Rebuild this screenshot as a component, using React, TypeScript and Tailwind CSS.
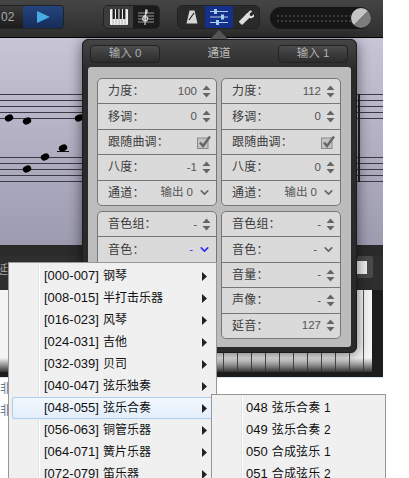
import { ChevronDown } from 'lucide-react'

const font = { fontFamily: '"Liberation Sans", "Noto Sans CJK SC", sans-serif' }

const channel0 = [
  { label: '力度：', value: '100' },
  { label: '移调：', value: '0' },
  { label: '跟随曲调：', check: true },
  { label: '八度：', value: '-1' },
  { label: '通道：', value: '输出 0', chevron: true },
]
const channel1 = [
  { label: '力度：', value: '112' },
  { label: '移调：', value: '0' },
  { label: '跟随曲调：', check: true },
  { label: '八度：', value: '0' },
  { label: '通道：', value: '输出 0', chevron: true },
]
// the last rows of this card sit behind the open menu
const sound0 = [
  { label: '音色组：', value: '-' },
  { label: '音色：', value: '-', chevron: true, active: true },
  { label: '', blank: true },
  { label: ' ', blank: true },
  { label: '  ', blank: true },
]
const sound1 = [
  { label: '音色组：', value: '-' },
  { label: '音色：', value: '-', chevron: true },
  { label: '音量：', value: '-' },
  { label: '声像：', value: '-' },
  { label: '延音：', value: '127' },
]

const groups = [
  ['[000-007]', '钢琴'],
  ['[008-015]', '半打击乐器'],
  ['[016-023]', '风琴'],
  ['[024-031]', '吉他'],
  ['[032-039]', '贝司'],
  ['[040-047]', '弦乐独奏'],
  ['[048-055]', '弦乐合奏'],
  ['[056-063]', '铜管乐器'],
  ['[064-071]', '簧片乐器'],
  ['[072-079]', '笛乐器'],
]

const voices = [
  ['048', '弦乐合奏 1'],
  ['049', '弦乐合奏 2'],
  ['050', '合成弦乐 1'],
  ['051', '合成弦乐 2'],
]

type Item = { label: string; value?: string; check?: boolean; chevron?: boolean; active?: boolean; blank?: boolean }

function Stepper() {
  return (
    <svg width="9" height="13" viewBox="0 0 9 13" className="shrink-0">
      <path d="M4.5 0.5 L8.5 5 L0.5 5 Z M0.5 8 L8.5 8 L4.5 12.5 Z" fill="#666" />
    </svg>
  )
}

function Check() {
  return (
    <svg width="14" height="14" viewBox="0 0 14 14" className="shrink-0">
      <rect x="0.5" y="3" width="10.5" height="10.5" fill="#c4c4c4" stroke="#8a8a8a" />
      <path d="M3 7.5 L6 11 L13 1.5" fill="none" stroke="#666" strokeWidth="2.4" />
    </svg>
  )
}

function Row({ item }: { item: Item }) {
  return (
    <div className="flex min-h-0 flex-1 items-center border-b border-[#777] pl-[10px] pr-[5px] last:border-b-0">
      {!item.blank && (
        <>
          <span className="text-[12px] tracking-[0.2px] text-[#3c3c3c]">{item.label}</span>
          <span className="ml-auto flex items-center gap-[5px]">
            {item.value && (
              <span className={`text-[11.5px] ${item.active ? 'text-[#3b3bea]' : 'text-[#555]'}`}>{item.value}</span>
            )}
            {item.check && <Check />}
            {item.chevron && (
              <ChevronDown size={13} strokeWidth={3} className={item.active ? 'text-[#3030f0]' : 'text-[#666]'} />
            )}
            {!item.check && !item.chevron && <Stepper />}
          </span>
        </>
      )}
    </div>
  )
}

function Card({ items }: { items: Item[] }) {
  return (
    <div className="flex h-[128px] flex-col rounded-[5px] border border-[#777] bg-[#dadada]">
      {items.map((item) => (
        <Row key={item.label} item={item} />
      ))}
    </div>
  )
}

function Score() {
  return (
    <svg width="383" height="207" viewBox="0 38 383 207" className="block">
      {[94, 100, 106, 112, 118, 157, 163, 169, 175, 181].map((y) => (
        <line key={y} x1="0" x2="383" y1={y + 0.5} y2={y + 0.5} stroke="#3a3a44" />
      ))}
      <line x1="359" x2="359" y1="94" y2="182" stroke="#222" strokeWidth="2" />
      <line x1="57" x2="69" y1="151.5" y2="151.5" stroke="#111" />
      {[
        [9, 118],
        [27, 121],
        [79, 118],
        [63, 148],
        [45, 157],
        [27, 169],
      ].map(([x, y]) => (
        <ellipse key={`${x}-${y}`} cx={x} cy={y} rx="4.4" ry="3.2" fill="#000" transform={`rotate(-25 ${x} ${y})`} />
      ))}
    </svg>
  )
}

function Keys() {
  return (
    <div className="relative h-[82px] w-[372px] bg-[repeating-linear-gradient(90deg,#f4f4f4_0px,#f4f4f4_13px,#555_13px,#555_14px)]">
      <div className="absolute inset-x-0 bottom-0 h-[14px] bg-gradient-to-b from-transparent to-[#333]" />
    </div>
  )
}

function TopBar() {
  return (
    <div className="relative flex h-[38px] items-center border-b border-black bg-gradient-to-b from-[#454545] to-[#2e2e2e] pb-[3px]">
      <div className="flex h-[24px] w-[64px] overflow-hidden rounded-r-[4px] border border-l-0 border-[#222]">
        <div className="flex w-[23px] items-center bg-gradient-to-b from-[#3a3a3a] to-[#1c1c1c] pl-[1px] text-[12px] text-[#aaa]">02</div>
        <div className="flex flex-1 items-center justify-center bg-gradient-to-b from-[#24457f] to-[#162c58]">
          <svg width="13" height="12" viewBox="0 0 13 12">
            <path d="M0 0 L13 6 L0 12 Z" fill="#45ace6" />
          </svg>
        </div>
      </div>

      <div className="ml-[39px] flex h-[24px] w-[57px] overflow-hidden rounded-[5px] border border-[#222]">
        <div className="flex w-[29px] items-center justify-center bg-[#3c3c3c]">
          <svg width="18" height="16" viewBox="0 0 18 16">
            <rect width="18" height="16" fill="#eee" rx="1" />
            {[2.5, 6, 9.5, 13].map((x) => (
              <rect key={x} x={x} y="0" width="2.4" height="10" fill="#222" />
            ))}
            {[3, 6, 9, 12, 15].map((x) => (
              <line key={x} x1={x} x2={x} y1="10" y2="16" stroke="#888" strokeWidth="0.6" />
            ))}
          </svg>
        </div>
        <div className="flex flex-1 items-center justify-center bg-[#1b1b1b]">
          <svg width="18" height="18" viewBox="0 0 18 18">
            {[5, 8, 11, 14].map((y) => (
              <line key={y} x1="1" x2="17" y1={y} y2={y} stroke="#999" />
            ))}
            <path d="M8 17 L8.8 2 Q10.5 1 10 4 Q9 7 6 9.5 Q4.5 12 8 13 Q11.5 12.5 10.5 9.5 Q8.5 8 7 10.5" fill="none" stroke="#d8d8d8" strokeWidth="1.2" />
          </svg>
        </div>
      </div>

      <div className="ml-[17px] flex h-[24px] w-[83px] overflow-hidden rounded-[5px] border border-[#222]">
        <div className="flex w-[27px] items-center justify-center bg-[#2a2a2a]">
          <svg width="12" height="14" viewBox="0 0 12 14">
            <path d="M3.5 0.5 L8.5 0.5 L11.5 13.5 L0.5 13.5 Z" fill="#d6d6d6" />
            <path d="M3 10 L8 3" stroke="#222" strokeWidth="1.2" />
          </svg>
        </div>
        <div className="flex w-[28px] items-center justify-center bg-[#14308a]">
          <svg width="18" height="16" viewBox="0 0 18 16">
            {[2.5, 8, 13.5].map((y) => (
              <line key={y} x1="0" x2="18" y1={y} y2={y} stroke="#b8c8e8" />
            ))}
            <rect x="4" y="0" width="3" height="5" fill="#9fd0f0" />
            <rect x="11" y="5.5" width="3" height="5" fill="#9fd0f0" />
            <rect x="6" y="11" width="3" height="5" fill="#9fd0f0" />
          </svg>
        </div>
        <div className="flex flex-1 items-center justify-center bg-[#2a2a2a]">
          <svg width="16" height="16" viewBox="0 0 24 24">
            <path
              d="M15 5.5a5 5 0 0 1 6.5-2.5l-4 4 .5 3 3 .5 4-4a6 6 0 0 1-8 7L6 24 1 19 12 8a5 5 0 0 1 3-2.5Z"
              fill="#ddd"
            />
          </svg>
        </div>
      </div>

      <div className="relative ml-[10px] mt-[2px] flex h-[22px] w-[101px] flex-col justify-center gap-[3px] rounded-full bg-[#161616] pl-[7px]">
        <div className="h-[2px] w-[76px] bg-[repeating-linear-gradient(90deg,#3a3a3a_0px,#3a3a3a_2px,transparent_2px,transparent_4px)]" />
        <div className="h-[2px] w-[76px] bg-[repeating-linear-gradient(90deg,#3a3a3a_0px,#3a3a3a_2px,transparent_2px,transparent_4px)]" />
        <div className="absolute right-0 top-[1px] h-[20px] w-[20px] rounded-full bg-[linear-gradient(135deg,#c4c4c4_50%,#7c7c7c_50%)]" />
      </div>
    </div>
  )
}

function MenuRow({ code, name, selected }: { code: string; name: string; selected?: boolean }) {
  return (
    <div className="relative flex h-[22px] items-center pl-[35px] pr-[9px]">
      {selected && (
        <div className="absolute inset-y-0 left-[3px] right-[3px] rounded-[2px] border border-[#aeccf0] bg-gradient-to-b from-[#f2f7fd] to-[#e3eefb]" />
      )}
      <span className="relative flex items-center gap-[4px] text-[#111]">
        <span className="text-[13px]">{code}</span>
        <span className="text-[12px]">{name}</span>
      </span>
      <svg width="5" height="9" viewBox="0 0 5 9" className="relative ml-auto">
        <path d="M0 0 L5 4.5 L0 9 Z" fill="#222" />
      </svg>
    </div>
  )
}

export default function App() {
  return (
    <div className="relative h-[478px] w-[409px] overflow-hidden bg-white" style={font}>
      <div className="flex w-[383px] flex-col">
        <TopBar />
        <div className="h-[207px] overflow-hidden bg-[#a3a1b5] bg-gradient-to-b from-[#c8c5d6] to-[#9d9bb0]">
          <Score />
        </div>
        <div className="h-[11px] bg-[#2a2a2a]" />
        <div className="relative h-[34px] bg-[#2e2e2e]">
          <span className="ml-[-4px] mt-[5px] block text-[12px] text-[#aaa]">延</span>
          <div className="absolute left-[357px] top-0 flex h-[22px] w-[16px] items-center rounded-[2px] bg-[#4a4a4a]">
            <div className="h-[13px] w-[10px] bg-[#f0f0f0]" />
          </div>
        </div>
        <div className="bg-[#1c1c1c] pb-[5px]">
          <Keys />
        </div>
        <div className="flex flex-col overflow-hidden border-t border-[#d6e8f8] text-[12px] text-[#667a90]">
          <span className="h-[22px] leading-[22px]">非</span>
          <span className="h-[22px] leading-[22px]">非</span>
        </div>
      </div>

      <div className="absolute left-[82px] top-[39px] flex h-[314px] w-[275px] flex-col rounded-[6px] border border-[#1c1c1c] bg-[#2a2a2a] shadow-[0_2px_14px_rgba(0,0,0,0.55)]">
        <div className="flex h-[27px] items-center justify-between rounded-t-[6px] bg-gradient-to-b from-[#454545] to-[#2d2d2d] pl-[7px] pr-[8px]">
          <div className="flex h-[18px] w-[70px] items-center justify-center rounded-[4px] border border-[#222] bg-gradient-to-b from-[#4c4c4c] to-[#2c2c2c] text-[11.5px] text-[#b0b0b0]">输入 0</div>
          <span className="text-[11.5px] text-[#bdbdbd]">通道</span>
          <div className="flex h-[18px] w-[70px] items-center justify-center rounded-[4px] border border-[#222] bg-gradient-to-b from-[#4c4c4c] to-[#2c2c2c] text-[11.5px] text-[#b0b0b0]">输入 1</div>
        </div>
        <div className="mx-[5px] mb-[5px] flex-1 rounded-[3px] bg-[#bcbcbc] px-[9px] pt-[11px]">
          <div className="grid grid-cols-[120px_120px] gap-x-[4px] gap-y-[5px]">
            <Card items={channel0} />
            <Card items={channel1} />
            <Card items={sound0} />
            <Card items={sound1} />
          </div>
        </div>
      </div>

      <div className="absolute left-[210px] top-[30px] h-0 w-0 border-x-[9px] border-b-[9px] border-x-transparent border-b-[#555]" />

      <div className="absolute left-[8px] top-[262px] w-[209px] border border-[#979797] bg-[#f0f0f0] py-[2px]">
        <div className="absolute inset-y-0 left-[29px] w-[2px] border-l border-[#e2e3e3] bg-white" />
        {groups.map(([code, name]) => (
          <MenuRow key={code} code={code} name={name} selected={code === '[048-055]'} />
        ))}
      </div>

      <div className="absolute left-[211px] top-[394px] h-[90px] w-[175px] border border-[#979797] bg-[#f0f0f0] py-[2px]">
        <div className="absolute inset-y-0 left-[29px] w-[2px] border-l border-[#e2e3e3] bg-white" />
        {voices.map(([code, name]) => (
          <div key={code} className="relative flex h-[22px] items-center gap-[4px] pl-[34px] text-[#111]">
            <span className="text-[13px]">{code}</span>
            <span className="text-[12px] tracking-[0.2px]">{name}</span>
          </div>
        ))}
      </div>
    </div>
  )
}
